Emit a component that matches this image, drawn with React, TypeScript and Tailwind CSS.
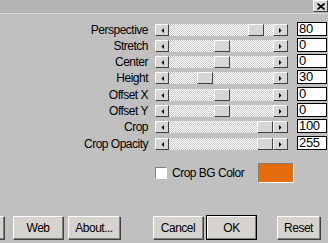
import type { ReactNode } from 'react';

interface Row {
    label: string;
    value: string;
    thumb: number; // offset of thumb inside the track, px
    h: string;
}

const ROWS: Row[] = [
    { label: 'Perspective', value: '80', thumb: 79, h: 'h-[16px]' },
    { label: 'Stretch', value: '0', thumb: 45, h: 'h-[16px]' },
    { label: 'Center', value: '0', thumb: 45, h: 'h-[16px]' },
    { label: 'Height', value: '30', thumb: 28, h: 'h-[17px]' },
    { label: 'Offset X', value: '0', thumb: 45, h: 'h-[16px]' },
    { label: 'Offset Y', value: '0', thumb: 45, h: 'h-[16px]' },
    { label: 'Crop', value: '100', thumb: 88, h: 'h-[17px]' },
    { label: 'Crop Opacity', value: '255', thumb: 88, h: 'h-[16px]' },
];

const bevel =
    'bg-[#d6d3ce] border border-t-white border-l-white border-r-[#808080] border-b-[#808080] shadow-[1px_1px_0_#404040]';

const flat = 'bg-[#d8d6d2] border border-t-white border-l-white border-r-[#404040] border-b-[#404040]';

function Arrow({ dir }: { dir: 'left' | 'right' }) {
    return (
        <svg width="3" height="5" viewBox="0 0 3 5">
            {dir === 'left'
                ? <polygon points="3,0 3,5 0.5,2.5" fill="#000" />
                : <polygon points="0,0 0,5 2.5,2.5" fill="#000" />}
        </svg>
    );
}

function Btn({ w, children, def }: { w: string; children: ReactNode; def?: boolean }) {
    return (
        <div className={`${w} h-[23px] flex items-center justify-center ${def ? 'outline outline-1 outline-black' : ''} ${bevel}`}>
            {children}
        </div>
    );
}

export default function App() {
    return (
        <div className="w-[328px] h-[243px] overflow-hidden bg-[#c0c0c0] text-black text-[12px] tracking-[-0.5px] font-['Liberation_Sans',Arial,sans-serif] flex flex-col">
            {/* title strip */}
            <div className="h-[14px] shrink-0 bg-[#b4b4b4] border-b border-[#dadada] flex justify-end">
                <div className={`w-[15px] h-[12px] flex items-center justify-center ${flat}`}>
                    <svg width="8" height="7" viewBox="0 0 8 7">
                        <path d="M0.5 0.5 L7.5 6.5 M7.5 0.5 L0.5 6.5" stroke="#000" strokeWidth="1.6" />
                    </svg>
                </div>
            </div>

            <div className="pt-[8px] flex flex-col">
                {ROWS.map(r => (
                    <div key={r.label} className={`${r.h} flex items-start`}>
                        <div className="w-[148px] text-right leading-[14px] pt-[1px]">{r.label}</div>
                        <div className="ml-[7px] mt-[2px] flex h-[12px]">
                            <div className={`w-[14px] h-[12px] flex items-center justify-center ${flat}`}>
                                <Arrow dir="left" />
                            </div>
                            <div className="w-[104px] h-[12px] flex bg-[repeating-conic-gradient(#c8c8c8_0_25%,#ffffff_0_50%)] bg-[length:2px_2px]">
                                <div className={`w-[16px] h-[12px] ${flat}`} style={{ marginLeft: r.thumb }} />
                            </div>
                            <div className={`w-[15px] h-[12px] flex items-center justify-center ${flat}`}>
                                <Arrow dir="right" />
                            </div>
                        </div>
                        <div className="ml-[9px] w-[30px] h-[14px] bg-white border border-black leading-[12px] pl-[1px] text-[13px] tracking-[-0.3px]">
                            {r.value}
                        </div>
                    </div>
                ))}
            </div>

            <div className="mt-[11px] flex items-center h-[20px]">
                <div className="ml-[155px] w-[12px] h-[12px] bg-white border border-t-[#808080] border-l-[#808080] border-r-white border-b-white" />
                <div className="ml-[5px]">Crop BG Color</div>
                <div className="ml-[14px] w-[36px] h-[20px] bg-[#e46c0c] border border-t-[#808080] border-l-[#808080] border-r-white border-b-white" />
            </div>

            <div className="mt-[33px] flex">
                <div className="ml-[-40px]"><Btn w="w-[44px]">&nbsp;</Btn></div>
                <div className="ml-[9px]"><Btn w="w-[50px]">Web</Btn></div>
                <div className="ml-[5px]"><Btn w="w-[52px]">About...</Btn></div>
                <div className="ml-[33px]"><Btn w="w-[50px]">Cancel</Btn></div>
                <div className="ml-[4px]"><Btn w="w-[49px]" def>OK</Btn></div>
                <div className="ml-[21px]"><Btn w="w-[43px]">Reset</Btn></div>
            </div>
        </div>
    );
}
